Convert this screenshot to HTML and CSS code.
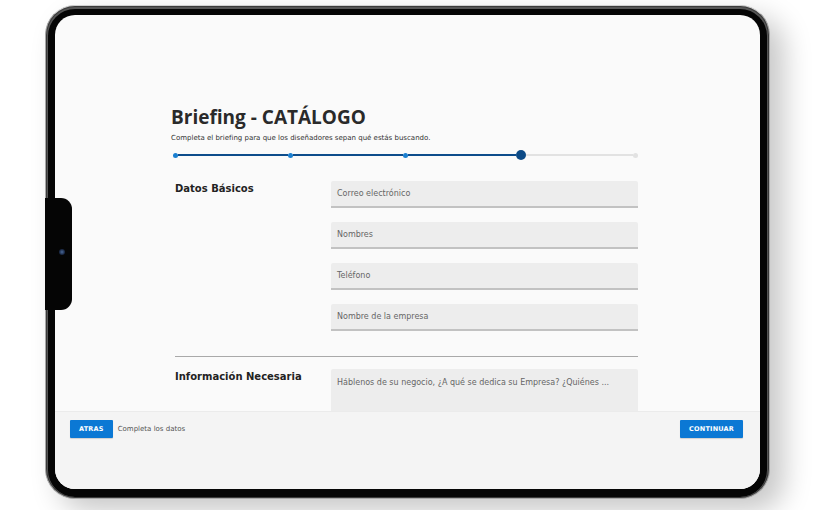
FILE: index.html
```html
<!DOCTYPE html>
<html lang="es">
<head>
<meta charset="utf-8">
<title>Briefing - CATÁLOGO</title>
<link rel="stylesheet" href="styles.css">
</head>
<body>
<div class="device">
  <div class="notch"><span class="camera"></span></div>
  <div class="screen">
    <main class="main">
      <div class="wrap">
        <h1 class="title">Briefing - CATÁLOGO</h1>
        <p class="subtitle">Completa el briefing para que los diseñadores sepan qué estás buscando.</p>
        <div class="progress">
          <span class="dot"></span><span class="line done w110"></span>
          <span class="dot"></span><span class="line done w110"></span>
          <span class="dot"></span><span class="line done w107"></span>
          <span class="dot big"></span><span class="line w107"></span>
          <span class="dot todo"></span>
        </div>
        <section class="section">
          <h2 class="label">Datos Básicos</h2>
          <div class="fields">
            <div class="field">Correo electrónico</div>
            <div class="field">Nombres</div>
            <div class="field">Teléfono</div>
            <div class="field">Nombre de la empresa</div>
          </div>
        </section>
        <hr class="divider">
        <section class="section">
          <h2 class="label">Información Necesaria</h2>
          <div class="fields">
            <div class="field area">Háblenos de su negocio, ¿A qué se dedica su Empresa? ¿Quiénes ...</div>
          </div>
        </section>
      </div>
    </main>
    <footer class="footer">
      <div class="left">
        <button class="btn">ATRAS</button>
        <span class="hint">Completa los datos</span>
      </div>
      <button class="btn">CONTINUAR</button>
    </footer>
  </div>
</div>
</body>
</html>
```
FILE: styles.css
```css
* { box-sizing: border-box; }
html, body { margin: 0; padding: 0; background: #ffffff; }
body { width: 822px; height: 510px; overflow: hidden; font-family: "DejaVu Sans", "Open Sans", sans-serif; }

.device {
  position: relative;
  margin: 5px 0 0 45px;
  width: 725px;
  height: 494px;
  background: #050505;
  border: 1px solid #a8a8a8;
  border-top-color: #d0d0d0;
  border-radius: 30px;
  padding: 9px;
  box-shadow: 14px 12px 28px rgba(0,0,0,0.22), inset 0 0 0 1px #3a3a3a, inset 0 1px 0 2px #555;
}
.notch {
  position: absolute;
  left: -1px;
  top: 192px;
  width: 27px;
  height: 112px;
  background: #050505;
  border-radius: 0 11px 11px 0;
  z-index: 2;
}
.camera {
  position: absolute;
  left: 14px;
  top: 51px;
  width: 6px;
  height: 6px;
  border-radius: 50%;
  background: radial-gradient(circle at 50% 50%, #4a6a9a 0, #1c2b48 60%, #0d1424 100%);
}
.screen {
  width: 705px;
  height: 474px;
  border-radius: 20px;
  overflow: hidden;
  background: #fafafa;
  display: flex;
  flex-direction: column;
}
.main {
  height: 396px;
  overflow: hidden;
  padding: 90px 0 0 116px;
}
.wrap { width: 467px; }
.title {
  margin: 0;
  font-family: "Open Sans", "DejaVu Sans", sans-serif;
  font-size: 19px;
  line-height: 24px;
  font-weight: 700;
  color: #2a2a2a;
}
.subtitle {
  margin: 4px 0 0;
  font-size: 7px;
  line-height: 10px;
  color: #333;
}
.progress {
  margin: 7px 0 0 2px;
  height: 10px;
  display: flex;
  align-items: center;
}
.dot { width: 5px; height: 5px; border-radius: 50%; background: #1a7fd0; flex: none; }
.dot.big { width: 10px; height: 10px; background: #0c4a86; }
.dot.todo { background: #e2e2e2; }
.line { height: 2px; background: #e2e2e2; flex: none; }
.line.done { background: #0d4c8b; }
.w110 { width: 110px; }
.w107 { width: 107.5px; }

.section {
  display: grid;
  grid-template-columns: 160px 307px;
  margin-top: 21px;
}
.label {
  margin: 0 0 0 4px;
  font-size: 10px;
  line-height: 14px;
  font-weight: 700;
  color: #222;
  padding-top: 1px;
}
.fields { display: flex; flex-direction: column; gap: 14px; }
.field {
  height: 27px;
  background: #ededed;
  border-bottom: 2px solid #c2c2c2;
  border-radius: 2px 2px 0 0;
  padding: 1px 0 0 6px;
  font-size: 8px;
  line-height: 24px;
  color: #666;
}
.field.area {
  height: 60px;
  border-bottom: none;
  line-height: 10px;
  padding-top: 9px;
}
.divider {
  margin: 25px 0 0 4px;
  border: 0;
  border-top: 1px solid #a9a9a9;
  height: 0;
}
.divider + .section { margin-top: 12px; }

.footer {
  height: 78px;
  background: #f4f4f4;
  border-top: 1px solid #ebebeb;
  display: flex;
  justify-content: space-between;
  align-items: flex-start;
  padding: 8px 17px 0 15px;
}
.left { display: flex; align-items: center; gap: 5px; }
.btn {
  height: 18px;
  padding: 0 9px;
  border: 0;
  border-radius: 1px;
  background: #0b78d4;
  color: #fff;
  font-family: inherit;
  font-size: 6.5px;
  font-weight: 700;
  letter-spacing: 0.2px;
  box-shadow: 0 1px 1px rgba(0,0,0,0.15);
}
.hint { font-size: 7px; color: #555; }
```
